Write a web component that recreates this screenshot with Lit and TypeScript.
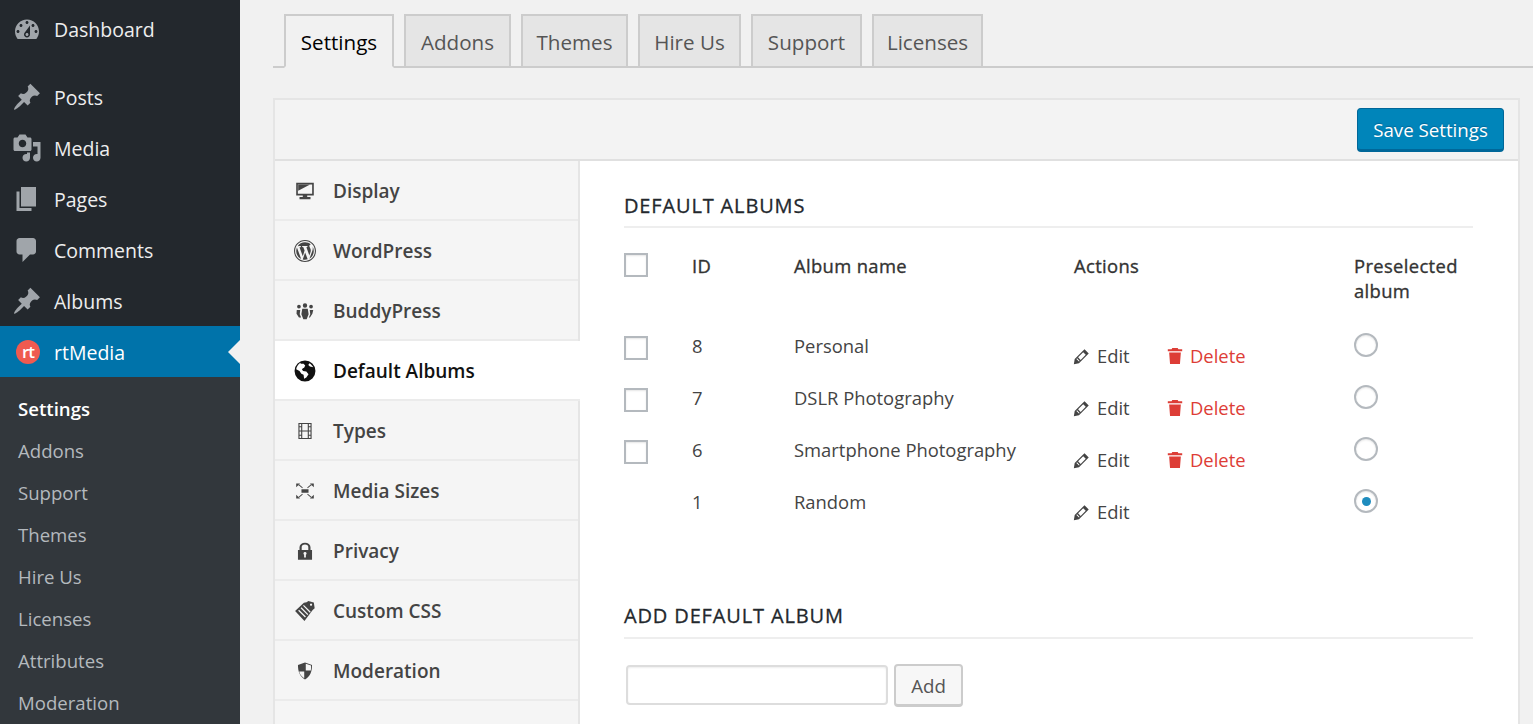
import { LitElement, html, css, svg } from "lit";
import { customElement } from "lit/decorators.js";

const dash: Record<string, string> = {
  dashboard: "M3.76 16h12.48c1.1-1.37 1.76-3.11 1.76-5 0-4.42-3.58-8-8-8s-8 3.58-8 8c0 1.89.66 3.63 1.76 5zM10 4c.55 0 1 .45 1 1s-.45 1-1 1-1-.45-1-1 .45-1 1-1zM6 6c.55 0 1 .45 1 1s-.45 1-1 1-1-.45-1-1 .45-1 1-1zm8 0c.55 0 1 .45 1 1s-.45 1-1 1-1-.45-1-1 .45-1 1-1zm-5.37 5.55L12 7v6c0 1.1-.9 2-2 2s-2-.9-2-2c0-.57.24-1.08.63-1.45zM4 10c.55 0 1 .45 1 1s-.45 1-1 1-1-.45-1-1 .45-1 1-1zm12 0c.55 0 1 .45 1 1s-.45 1-1 1-1-.45-1-1 .45-1 1-1zm-5 3c0-.55-.45-1-1-1s-1 .45-1 1 .45 1 1 1 1-.45 1-1z",
  post: "M10.44 3.02l1.82-1.82 6.36 6.35-1.83 1.82c-1.05-.68-2.48-.57-3.41.36l-.75.75c-.92.93-1.04 2.35-.35 3.41l-1.83 1.82-2.41-2.41-2.8 2.79c-.42.42-3.38 2.71-3.8 2.29s1.86-3.39 2.28-3.81l2.79-2.79L4.1 9.36l1.83-1.82c1.05.69 2.48.57 3.4-.36l.75-.75c.93-.92 1.05-2.35.36-3.41z",
  media: "M13 11V4c0-.55-.45-1-1-1h-1.67L9 1H5L3.67 3H2c-.55 0-1 .45-1 1v7c0 .55.45 1 1 1h10c.55 0 1-.45 1-1zM7 4.5c1.38 0 2.5 1.12 2.5 2.5S8.38 9.5 7 9.5 4.5 8.38 4.5 7 5.62 4.5 7 4.5zM14 6h5v10.5c0 1.38-1.12 2.5-2.5 2.5S14 17.88 14 16.5s1.12-2.5 2.5-2.5c.17 0 .34.02.5.05V9h-3V6zm-4 8.05V13h2v3.5c0 1.38-1.12 2.5-2.5 2.5S7 17.88 7 16.5 8.12 14 9.5 14c.17 0 .34.02.5.05z",
  page: "M6 15V2h10v13H6zm-1 1h8v2H3V5h2v11z",
  comments: "M5 2h9c1.1 0 2 .9 2 2v7c0 1.1-.9 2-2 2h-2l-5 5v-5H5c-1.1 0-2-.9-2-2V4c0-1.1.9-2 2-2z",
  wordpress: "M20 10c0-5.52-4.48-10-10-10S0 4.48 0 10s4.48 10 10 10 10-4.48 10-10zM10 1.01c4.97 0 8.99 4.02 8.99 8.99s-4.02 8.99-8.99 8.99S1.01 14.97 1.01 10 5.03 1.01 10 1.01zM8.01 14.82L4.96 6.61c.49-.03 1.05-.08 1.05-.08.43-.05.38-1.01-.06-.99 0 0-1.29.1-2.13.1-.15 0-.33 0-.52-.01 1.44-2.17 3.89-3.6 6.7-3.6 2.09 0 3.99.79 5.41 2.09-.6-.08-1.45.35-1.45 1.42 0 .66.38 1.22.79 1.88.31.54.5 1.22.5 2.21 0 1.34-1.27 4.48-1.27 4.48l-2.71-7.5c.48-.03.75-.16.75-.16.43-.05.38-1.1-.05-1.08 0 0-1.3.11-2.14.11-.78 0-2.11-.11-2.11-.11-.43-.02-.48 1.06-.05 1.08l.84.08 1.12 3.04zm6.02 2.15L16.64 10s.67-1.69.39-3.81c.63 1.14.94 2.42.94 3.81 0 2.96-1.56 5.58-3.94 6.97zM2.68 6.77L6.5 17.25c-2.67-1.3-4.47-4.08-4.47-7.25 0-1.16.2-2.23.65-3.23zm7.45 4.53l2.29 6.25c-.75.27-1.57.42-2.42.42-.72 0-1.41-.11-2.06-.3z",
  display: "M2 2.500h16V14h-6v1.500h3v2H5v-2h3V14H2V2.500zM3.500 4v8.500h13V4h-13zM3.800 4.300h10.400L3.800 9.800V4.300z",
  people: "M12 5a2 2 0 1 1-4 0 2 2 0 1 1 4 0zM6.200 6a1.700 1.700 0 1 1-3.400 0 1.700 1.700 0 1 1 3.400 0zM17.200 6a1.700 1.700 0 1 1-3.400 0 1.700 1.700 0 1 1 3.400 0zM7.500 8h5l.8 5-1.800 4.500h-3L6.700 13zM2.500 9h3.200l-.5 4 1.300 3H4.500l-2.200-3.500zM17.500 9h-3.200l.5 4-1.300 3h1l2.200-3.500z",
  film: "M4 2.700h12v14.600H4zM5 3.700v2h1.500v-2zM5 6.700v2.900h1.500V6.700zM5 10.400v2.900h1.500v-2.900zM5 14.300v2h1.500v-2zM13.500 3.700v2H15v-2zM13.500 6.700v2.900H15V6.700zM13.500 10.400v2.900H15v-2.900zM13.500 14.300v2H15v-2zM7.500 3.700v5.800h5V3.700zM7.500 10.500v5.800h5v-5.800z",
  sizes: "M2 3.200h3.500L2 6.700zM18 3.200h-3.500L18 6.700zM2 16.800h3.500L2 13.300zM18 16.800h-3.500l3.500-3.500zM4 4.500l.5-.6 3.500 3-.5.6zM16 4.500l-.5-.6-3.500 3 .5.6zM4 15.500l.5.6 3.500-3-.5-.6zM16 15.500l-.5.6-3.500-3 .5-.6zM6.800 8.300h6.400v3.400H6.800z",
  lock: "M3.600 9H5V6.700a5 4.200 0 0 1 10 0V9h1.400v9H3.600V9zM7 9h6V6.700a3 2.500 0 0 0-6 0V9zM10 11a1.300 1.300 0 0 0-.8 2.400V16h1.600v-2.600A1.300 1.300 0 0 0 10 11z",
  css: "M1 10L9 2.500l2.500-.5L13 .8l5 1.500.8 5.200L17 9 9.500 19zM3.800 9.700l.8-.8 6.200 6.200-.8.8zM6 7.500l.8-.8 6.200 6.200-.8.800zM8.200 5.300l.8-.8 6.200 6.200-.8.800zM15.500 3.200a1 1 0 1 1-.01 0z",
  shield: "M10 2.200l6.400 2.300c0 6-1.500 10-6.400 13.300C5.100 14.500 3.600 10.500 3.600 4.500zM10.700 3.500v6h4.600c.2-1.500.2-3 .2-4.500zM9.300 10.500H4.700c.5 2.500 2.100 4.500 4.600 6z",
  globe: "M10 .5a9.500 9.500 0 1 1 0 19 9.500 9.500 0 0 1 0-19zM6 2.500C4 3.500 2.300 6 2 8.500l3 1.500 1.700 2.500 2 1 .5 3.500 2-1 2-3-2-2.500-3-.5-1-1.500 1-1 1-.5 1-2-1.500-1.500H6zM14 3l-1 1.500 1.500 1.500 3 .5C16.500 5 15.500 4 14 3z",
  pencil: "M13.500 1.500l5 5L7 18l-6 1 1-6L13.500 1.500zM4 13l3 3 .8-.8-3-3L4 13zm2-2 3 3 6-6-3-3-6 6z",
  trash: "M7 1h6l.8 1.600H18v2.200H2V2.600h4.200L7 1zM3.500 6h13l-1 13H4.500l-1-13z",
};

function icon(name: string) {
  return html`<svg class="i-${name}" viewBox="0 0 20 20" aria-hidden="true">${svg`<path fill-rule="evenodd" d=${dash[name]}></path>`}</svg>`;
}

const menu = [
  ["dashboard", "Dashboard", true],
  ["post", "Posts", false],
  ["media", "Media", false],
  ["page", "Pages", false],
  ["comments", "Comments", false],
  ["post", "Albums", false],
] as const;

const subs = ["Settings", "Addons", "Support", "Themes", "Hire Us", "Licenses", "Attributes", "Moderation"];
const tabs: [string, number][] = [["Settings", 110], ["Addons", 107], ["Themes", 107], ["Hire Us", 103], ["Support", 111], ["Licenses", 111]];
const nav = [
  ["display", "Display"],
  ["wordpress", "WordPress"],
  ["people", "BuddyPress"],
  ["globe", "Default Albums"],
  ["film", "Types"],
  ["sizes", "Media Sizes"],
  ["lock", "Privacy"],
  ["css", "Custom CSS"],
  ["shield", "Moderation"],
  ["", "Other Settings"],
];
const albums = [
  { id: 8, name: "Personal", del: true, on: false },
  { id: 7, name: "DSLR Photography", del: true, on: false },
  { id: 6, name: "Smartphone Photography", del: true, on: false },
  { id: 1, name: "Random", del: false, on: true },
];

@customElement("app-root")
export class AppRoot extends LitElement {
  static styles = css`
    :host {
      display: flex;
      width: 1533px;
      height: 724px;
      overflow: hidden;
      background: #f1f1f1;
      font-family: "Open Sans", "Noto Sans", sans-serif;
      font-size: 19.5px;
      color: #444;
    }
    * { box-sizing: border-box; }
    svg { fill: currentColor; display: block; flex: none; }

    .side { width: 240px; flex: none; background: #23282d; padding-top: 4px; display: flex; flex-direction: column; color: #eee; }
    .mi { height: 51px; display: flex; align-items: center; padding-left: 12px; gap: 12px; position: relative; }
    .mi span.t { margin-top: 1px; }
    .mi svg { width: 30px; height: 30px; color: #a0a5aa; }
    .mi.first { margin-bottom: 16px; }
    .mi.first span.t { margin-top: 0; }
    .mi.active { background: #0073aa; color: #fff; }
    .mi.active::after {
      content: ""; position: absolute; right: 0; top: 14px;
      border: 12px solid transparent; border-left: 0; border-right-color: #f1f1f1;
    }
    .logo { width: 24px; height: 24px; margin: 0 2px 0 4px; border-radius: 50%; background: #ef5a50; color: #fff; display: flex; align-items: center; justify-content: center; font-size: 17px; font-weight: 600; letter-spacing: -1px; line-height: 1; flex: none; }
    .sub { flex: 1; background: #32373c; padding-top: 10px; }
    .si { height: 42px; display: flex; align-items: center; padding-left: 18px; color: #b4b9be; font-size: 18.6px; }
    .si.on { color: #fff; font-weight: 600; }

    .main { flex: 1; min-width: 0; padding: 14px 13px 0 33px; }
    .tabs { display: flex; gap: 10px; height: 54px; margin-right: -13px; border-bottom: 2px solid #ccc; padding-left: 11px; }
    .tab { height: 54px; background: #e5e5e5; border: 2px solid #ccc; display: flex; align-items: center; justify-content: center; color: #555; font-size: 20.6px; padding-top: 2px; flex: none; }
    .tab.on { background: #f1f1f1; border-bottom-color: #f1f1f1; color: #000; }

    .panel { margin-top: 30px; border: 2px solid #e5e5e5; border-bottom: 0; background: #fff; height: 640px; }
    .head { height: 61px; background: #f3f3f3; border-bottom: 2px solid #e0e0e0; display: flex; justify-content: flex-end; align-items: flex-start; padding: 8px 14px 0 0; }
    .save { width: 147px; height: 44px; background: #0085ba; border: 1px solid #006799; border-bottom-width: 3px; border-radius: 4px; color: #fff; font: inherit; font-size: 18.7px; text-shadow: 0 -1px 1px #006799; padding: 0; }
    .body { display: flex; }
    .nav { width: 305px; flex: none; background: #f5f5f5; border-right: 2px solid #e5e5e5; }
    .ni { height: 60px; display: flex; align-items: center; padding: 2px 0 0 19px; gap: 17px; border-bottom: 2px solid #ebebeb; font-weight: 600; color: #444; font-size: 19px; }
    .ni svg { width: 22px; height: 22px; color: #444; }
    .ni .blank { width: 22px; flex: none; }
    .ni.last { align-items: flex-start; padding-top: 22px; }
    .ni.on { background: #fff; color: #111; margin-right: -2px; position: relative; }
    .ni.on svg { color: #111; }

    .content { flex: 1; padding: 28px 45px 0 44px; color: #444; }
    h2 { margin: 0; height: 39px; font-size: 20px; font-weight: 400; letter-spacing: .85px; -webkit-text-stroke: .3px #23282d; color: #23282d; border-bottom: 2px solid #eee; line-height: 34px; }
    .grid { display: grid; grid-template-columns: 68px 102px 280px 280px 1fr; font-size: 18.4px; }
    .hd { font-weight: 400; letter-spacing: .35px; -webkit-text-stroke: .35px #333; padding-top: 25px; height: 105px; line-height: 25px; color: #333; }
    .cell { height: 52px; line-height: 26px; }
    .box { width: 24px; height: 24px; border: 2px solid #b4b9be; background: #fff; display: block; box-shadow: inset 0 1px 2px rgba(0,0,0,.1); }
    .cell .box { margin-top: 3px; }
    .acts { display: flex; align-items: flex-start; padding-top: 10px; }
    .edit, .del { display: flex; align-items: center; }
    .edit { width: 93px; color: #444; gap: 7px; margin-left: -1px; }
    .del { color: #dd3d36; gap: 6px; }
    .edit svg { width: 17px; height: 17px; }
    .del svg { width: 18px; height: 18px; }
    .radio { width: 24px; height: 24px; border-radius: 50%; border: 2px solid #b4b9be; background: #fff; display: flex; align-items: center; justify-content: center; box-shadow: inset 0 1px 2px rgba(0,0,0,.1); }
    .radio i { width: 9px; height: 9px; border-radius: 50%; background: #1e8cbe; }
    .add-h { margin-top: 59px; line-height: 32px; }
    .form { display: flex; gap: 6px; padding: 25px 0 0 2px; align-items: flex-start; }
    .input { width: 262px; height: 40px; margin-top: 1px; border: 2px solid #ddd; border-radius: 4px; background: #fff; box-shadow: inset 0 1px 2px rgba(0,0,0,.07); }
    .add { width: 69px; height: 43px; background: #f7f7f7; border: 2px solid #ccc; border-bottom-width: 3px; border-radius: 4px; color: #555; font: inherit; font-size: 18.7px; padding: 0; }
  `;

  render() {
    return html`
      <aside class="side">
        ${menu.map(([i, t, f]) => html`<div class="mi ${f ? "first" : ""}">${icon(i)}<span class="t">${t}</span></div>`)}
        <div class="mi active"><span class="logo">rt</span><span class="t">rtMedia</span></div>
        <div class="sub">
          ${subs.map((s, k) => html`<div class="si ${k === 0 ? "on" : ""}">${s}</div>`)}
        </div>
      </aside>
      <main class="main">
        <div class="tabs">
          ${tabs.map(([t, w], k) => html`<div class="tab ${k === 0 ? "on" : ""}" style="width:${w}px">${t}</div>`)}
        </div>
        <section class="panel">
          <div class="head"><button class="save">Save Settings</button></div>
          <div class="body">
            <nav class="nav">
              ${nav.map(([i, t]) => html`<div class="ni ${t === "Default Albums" ? "on" : ""} ${i ? "" : "last"}">${i ? icon(i) : html`<span class="blank"></span>`}<span>${t}</span></div>`)}
            </nav>
            <div class="content">
              <h2>DEFAULT ALBUMS</h2>
              <div class="grid">
                <div class="hd"><span class="box"></span></div>
                <div class="hd">ID</div>
                <div class="hd">Album name</div>
                <div class="hd">Actions</div>
                <div class="hd">Preselected album</div>
                ${albums.map((a) => html`
                  <div class="cell">${a.del ? html`<span class="box"></span>` : ""}</div>
                  <div class="cell">${a.id}</div>
                  <div class="cell">${a.name}</div>
                  <div class="cell acts">
                    <span class="edit">${icon("pencil")}Edit</span>
                    ${a.del ? html`<span class="del">${icon("trash")}Delete</span>` : ""}
                  </div>
                  <div class="cell"><span class="radio">${a.on ? html`<i></i>` : ""}</span></div>
                `)}
              </div>
              <h2 class="add-h">ADD DEFAULT ALBUM</h2>
              <div class="form">
                <div class="input"></div>
                <button class="add">Add</button>
              </div>
            </div>
          </div>
        </section>
      </main>
    `;
  }
}
